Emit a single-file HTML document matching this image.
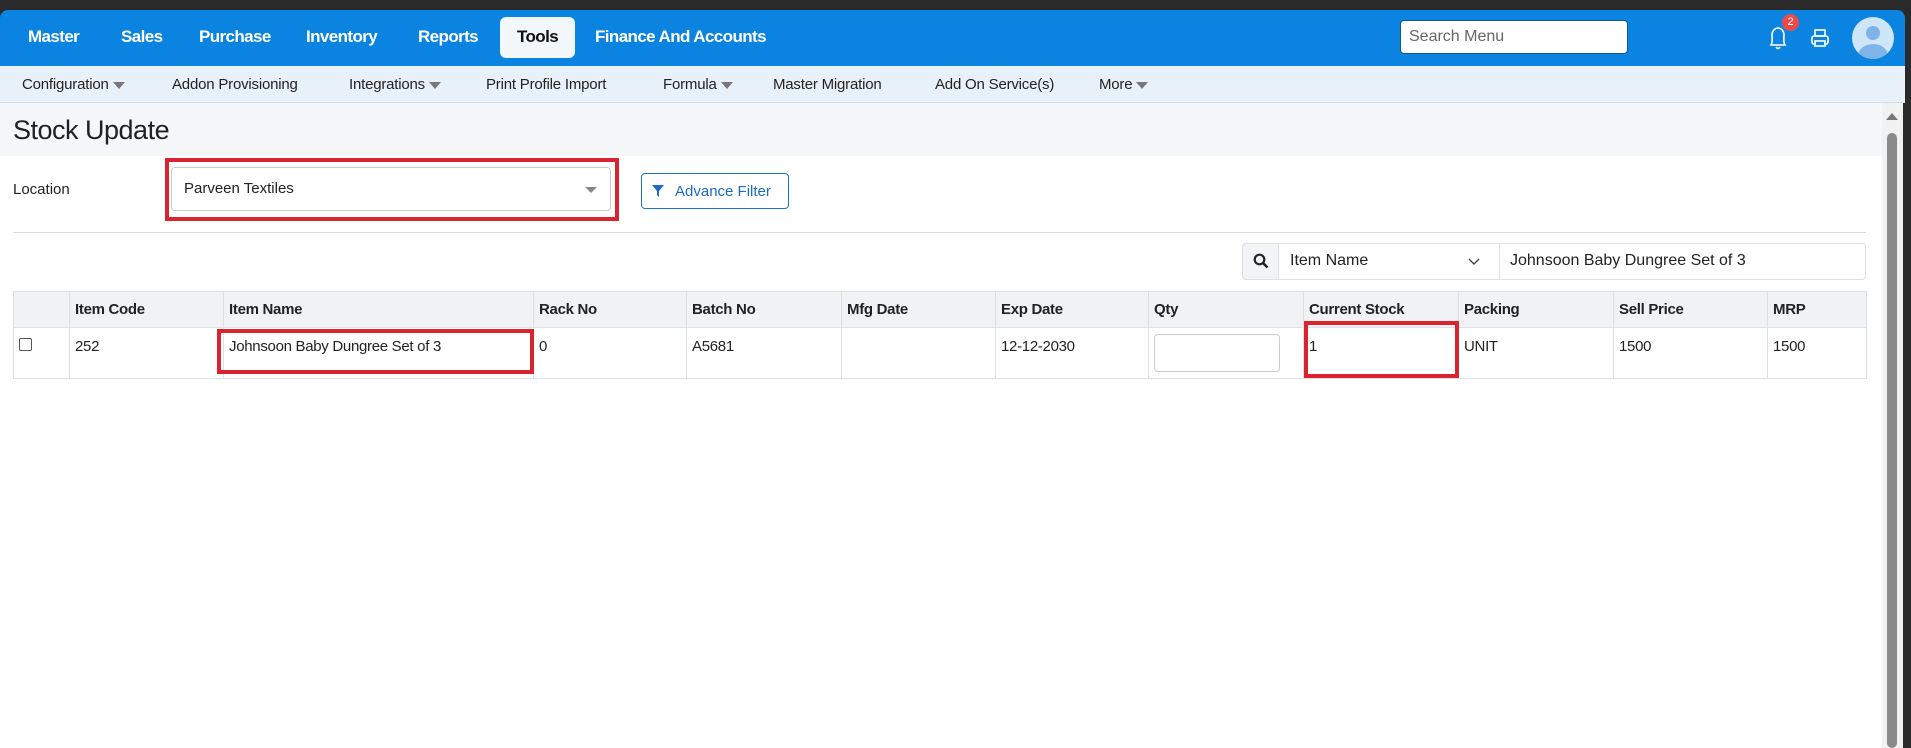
<!DOCTYPE html>
<html><head><meta charset="utf-8"><style>
*{box-sizing:border-box;margin:0;padding:0}
body{width:1911px;height:748px;overflow:hidden;background:#2a2a2a;font-family:"Liberation Sans",sans-serif;position:relative}
.abs{position:absolute}
#nav{left:0;top:10px;width:1905px;height:56px;background:#0a84e0;border-radius:8px 8px 0 0}
.ni{position:absolute;top:17px;color:#fff;font-weight:bold;font-size:17px;letter-spacing:-0.6px}
#sub{left:0;top:66px;width:1905px;height:37px;background:#e8f1fa;border-bottom:1px solid #d3dbe3}
.si{position:absolute;top:10px;font-size:15px;color:#222;letter-spacing:-0.2px}
.ar{display:inline-block;width:0;height:0;border-left:6px solid transparent;border-right:6px solid transparent;border-top:7px solid #777;margin-left:4px;vertical-align:middle}
#main{left:0;top:103px;width:1882px;height:645px;background:#fff}
#title{left:0;top:0;width:1882px;height:53px;background:#f6f7f8}
.rb{position:absolute;border:4px solid #d9232e}
table{position:absolute;left:13px;top:188px;border-collapse:collapse;font-size:15px;color:#222;table-layout:fixed}
td,th{border:1px solid #dde1e5;text-align:left;padding:0 5px;letter-spacing:-0.3px}
th{height:36px;background:#f1f2f3;font-weight:bold}
td{height:51px;vertical-align:top;padding-top:10px}
</style></head><body>
<div id="nav" class="abs">
<span class="ni" style="left:28px">Master</span>
<span class="ni" style="left:121px">Sales</span>
<span class="ni" style="left:199px">Purchase</span>
<span class="ni" style="left:306px">Inventory</span>
<span class="ni" style="left:418px">Reports</span>
<div class="abs" style="left:500px;top:7px;width:75px;height:41px;background:#f2f7fc;border-radius:6px"></div>
<span class="ni" style="left:517px;color:#111">Tools</span>
<span class="ni" style="left:595px">Finance And Accounts</span>
<div class="abs" style="left:1400px;top:10px;width:228px;height:34px;background:#fff;border:1px solid #0d5a8a;border-radius:4px;font-size:16px;color:#666;padding:7px 8px">Search Menu</div>
<svg class="abs" style="left:1766px;top:14px" width="24" height="30" viewBox="0 0 24 30"><path d="M5 21 C7 18 6 14 6 11 C6 7 9 4 12 4 C15 4 18 7 18 11 C18 14 17 18 19 21 Z M10 23 Q12 26 14 23" fill="none" stroke="#fff" stroke-width="1.6"/></svg>
<div class="abs" style="left:1782px;top:4px;width:17px;height:17px;border-radius:50%;background:#e94b4b;color:#fff;font-size:11px;text-align:center;line-height:17px">2</div>
<svg class="abs" style="left:1809px;top:17px" width="22" height="22" viewBox="0 0 22 22"><rect x="6" y="3" width="10" height="6" fill="none" stroke="#fff" stroke-width="1.6"/><rect x="3" y="9" width="16" height="8" rx="2" fill="none" stroke="#fff" stroke-width="1.6"/><rect x="6" y="14" width="10" height="5" fill="#0a84e0" stroke="#fff" stroke-width="1.6"/></svg>
<svg class="abs" style="left:1851px;top:6px" width="44" height="44" viewBox="0 0 44 44"><defs><clipPath id="c"><circle cx="22" cy="22" r="21"/></clipPath></defs><circle cx="22" cy="22" r="21" fill="#cfe5f8"/><g clip-path="url(#c)"><circle cx="22" cy="17" r="7" fill="#7fb4e8"/><ellipse cx="22" cy="40" rx="15" ry="12" fill="#7fb4e8"/></g></svg>
</div>
<div id="sub" class="abs">
<span class="si" style="left:22px">Configuration<i class="ar"></i></span>
<span class="si" style="left:172px">Addon Provisioning</span>
<span class="si" style="left:349px">Integrations<i class="ar"></i></span>
<span class="si" style="left:486px">Print Profile Import</span>
<span class="si" style="left:663px">Formula<i class="ar"></i></span>
<span class="si" style="left:773px">Master Migration</span>
<span class="si" style="left:935px">Add On Service(s)</span>
<span class="si" style="left:1099px">More<i class="ar"></i></span>
</div>
<div id="main" class="abs">
<div id="title" class="abs"><span class="abs" style="left:13px;top:12px;font-size:27px;color:#222;letter-spacing:-0.5px">Stock Update</span></div>
<span class="abs" style="left:13px;top:78px;font-size:15px;color:#222">Location</span>
<div class="rb" style="left:165px;top:55px;width:454px;height:63px"></div>
<div class="abs" style="left:171px;top:64px;width:440px;height:44px;border:1px solid #ccc;border-radius:4px;font-size:15px;color:#222;padding:12px 12px">Parveen Textiles</div>
<div class="abs" style="left:585px;top:84px;width:0;height:0;border-left:6px solid transparent;border-right:6px solid transparent;border-top:6px solid #888"></div>
<div class="abs" style="left:641px;top:70px;width:148px;height:36px;border:1px solid #1a73c8;border-radius:4px;color:#1a6bc4;font-size:15px;padding:9px 0 0 33px">Advance Filter</div>
<svg class="abs" style="left:652px;top:82px" width="12" height="12" viewBox="0 0 12 12"><path d="M0 0H12L7 6V12L5 10V6Z" fill="#1a6bc4"/></svg>
<div class="abs" style="left:13px;top:129px;width:1853px;height:1px;background:#dcdcdc"></div>
<div class="abs" style="left:1242px;top:140px;width:624px;height:37px;border:1px solid #dde1e5;border-radius:4px"></div>
<div class="abs" style="left:1242px;top:140px;width:37px;height:37px;background:#f3f4f5;border:1px solid #dde1e5;border-radius:4px 0 0 4px"></div>
<svg class="abs" style="left:1253px;top:150px" width="16" height="16" viewBox="0 0 16 16"><circle cx="6.5" cy="6.5" r="4.8" fill="none" stroke="#222" stroke-width="2.2"/><path d="M10 10L14.5 14.5" stroke="#222" stroke-width="2.6"/></svg>
<div class="abs" style="left:1499px;top:140px;width:1px;height:37px;background:#dde1e5"></div>
<span class="abs" style="left:1290px;top:149px;font-size:16px;color:#222">Item Name</span>
<svg class="abs" style="left:1468px;top:155px" width="12" height="8" viewBox="0 0 12 8"><path d="M1 1L6 6L11 1" fill="none" stroke="#444" stroke-width="1.4"/></svg>
<span class="abs" style="left:1510px;top:149px;font-size:16px;color:#222">Johnsoon Baby Dungree Set of 3</span>
<table>
<colgroup><col style="width:56px"><col style="width:154px"><col style="width:310px"><col style="width:153px"><col style="width:155px"><col style="width:154px"><col style="width:153px"><col style="width:155px"><col style="width:155px"><col style="width:155px"><col style="width:154px"><col style="width:99px"></colgroup>
<tr><th></th><th>Item Code</th><th>Item Name</th><th>Rack No</th><th>Batch No</th><th>Mfg Date</th><th>Exp Date</th><th>Qty</th><th>Current Stock</th><th>Packing</th><th>Sell Price</th><th>MRP</th></tr>
<tr><td><div style="width:13px;height:13px;border:1px solid #555;border-radius:2px;margin-top:0"></div></td><td>252</td><td>Johnsoon Baby Dungree Set of 3</td><td>0</td><td>A5681</td><td></td><td>12-12-2030</td><td style="padding-top:6px"><div style="width:126px;height:38px;border:1px solid #ccc;border-radius:4px"></div></td><td>1</td><td>UNIT</td><td>1500</td><td>1500</td></tr>
</table>
<div class="rb" style="left:217px;top:226px;width:317px;height:45px"></div>
<div class="rb" style="left:1304px;top:218px;width:155px;height:57px"></div>
</div>
<div class="abs" style="left:1882px;top:103px;width:21px;height:645px;background:#f1f1f1"></div>
<div class="abs" style="left:1886px;top:113px;width:0;height:0;border-left:6px solid transparent;border-right:6px solid transparent;border-bottom:7px solid #777"></div>
<div class="abs" style="left:1887px;top:133px;width:10px;height:615px;background:#8a8a8a;border-radius:5px"></div>
</body></html>
